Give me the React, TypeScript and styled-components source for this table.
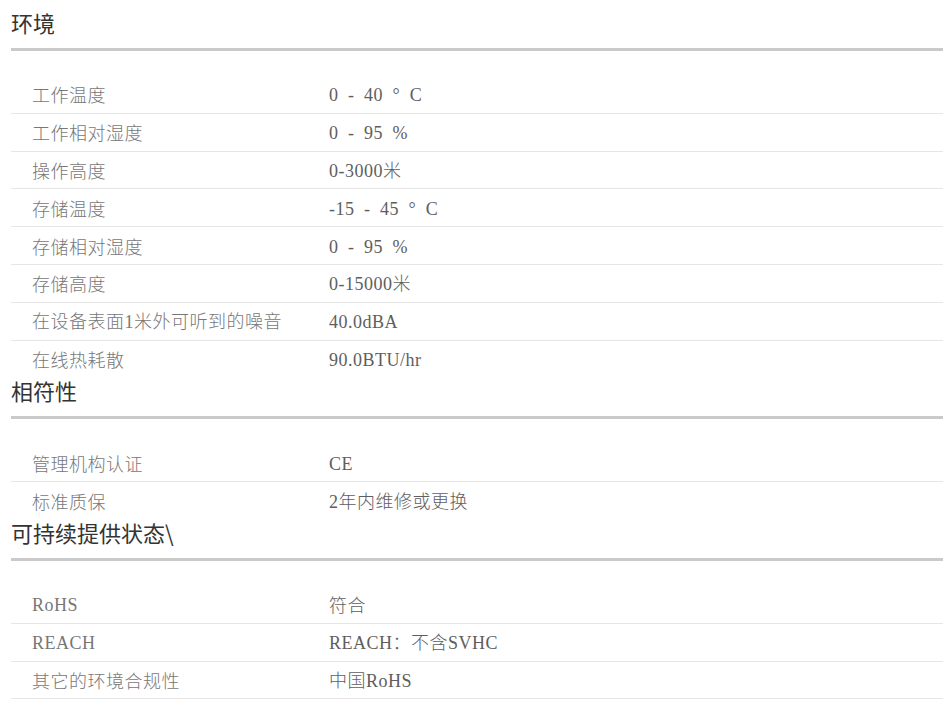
import React from 'react'
import styled, { createGlobalStyle } from 'styled-components'

type Spec = [string, string]

const sections: { title: string; rows: Spec[]; closed?: boolean }[] = [
  {
    title: '环境',
    rows: [
      ['工作温度', '0 - 40 ° C'],
      ['工作相对湿度', '0 - 95 %'],
      ['操作高度', '0-3000米'],
      ['存储温度', '-15 - 45 ° C'],
      ['存储相对湿度', '0 - 95 %'],
      ['存储高度', '0-15000米'],
      ['在设备表面1米外可听到的噪音', '40.0dBA'],
      ['在线热耗散', '90.0BTU/hr'],
    ],
  },
  {
    title: '相符性',
    rows: [
      ['管理机构认证', 'CE'],
      ['标准质保', '2年内维修或更换'],
    ],
  },
  {
    title: '可持续提供状态\\',
    rows: [
      ['RoHS', '符合'],
      ['REACH', 'REACH：不含SVHC'],
      ['其它的环境合规性', '中国RoHS'],
    ],
    closed: true,
  },
]

const GlobalStyle = createGlobalStyle`
  html, body {
    margin:0;
    padding:0;
    background:#fff;
  }
  body {
    font-family:"Noto Sans CJK SC", "Noto Sans", sans-serif;
  }
`

// latin runs get a serif face, spaces widened to the half-width rhythm of the original
const Mixed = ({ text }: { text: string }) => (
  <>
    {text
      .split(/([\u0000-\u00ff]+)/)
      .filter(Boolean)
      .map((part, i) =>
        /^[\u0000-\u00ff]+$/.test(part) ? <Latin key={i}>{part}</Latin> : <span key={i}>{part}</span>
      )}
  </>
)

const App = () => {
  return (
    <Page>
      <GlobalStyle />
      {sections.map((s) => (
        <section key={s.title}>
          <Heading>{s.title}</Heading>
          <Table>
            {s.rows.map(([label, value]) => (
              <Row key={label} $closed={s.closed}>
                <Label><Mixed text={label} /></Label>
                <Value><Mixed text={value} /></Value>
              </Row>
            ))}
          </Table>
        </section>
      ))}
    </Page>
  )
}
export default App

const Page = styled.div`
  padding:10px 3px 0 11px;
`

const Heading = styled.h2`
  margin:0;
  font-family:"Noto Sans CJK SC", "Noto Sans", sans-serif;
  font-size:22px;
  font-weight:400;
  line-height:24px;
  color:#333;
  padding-bottom:14px;
  border-bottom:3px solid #cacaca;
`

const Table = styled.div`
  margin-top:25px;
`

const Row = styled.div<{ $closed?: boolean }>`
  display:grid;
  grid-template-columns:318px 1fr;
  align-items:center;
  height:37.8px;
  box-sizing:border-box;
  border-bottom:1px solid #e6e6e6;
  &:last-child {
    border-bottom-color:${(p) => (p.$closed ? '#e6e6e6' : 'transparent')};
  }
`

const Cell = styled.div`
  font-family:"Noto Sans CJK SC", sans-serif;
  font-size:18px;
  font-weight:300;
  line-height:22px;
  letter-spacing:0.5px;
  white-space:pre;
`

const Label = styled(Cell)`
  padding-left:21px;
  color:#777;
`

const Value = styled(Cell)`
  color:#5e5e5e;
`

const Latin = styled.span`
  font-family:"Liberation Serif", serif;
  font-size:18px;
  word-spacing:4.5px;
`
